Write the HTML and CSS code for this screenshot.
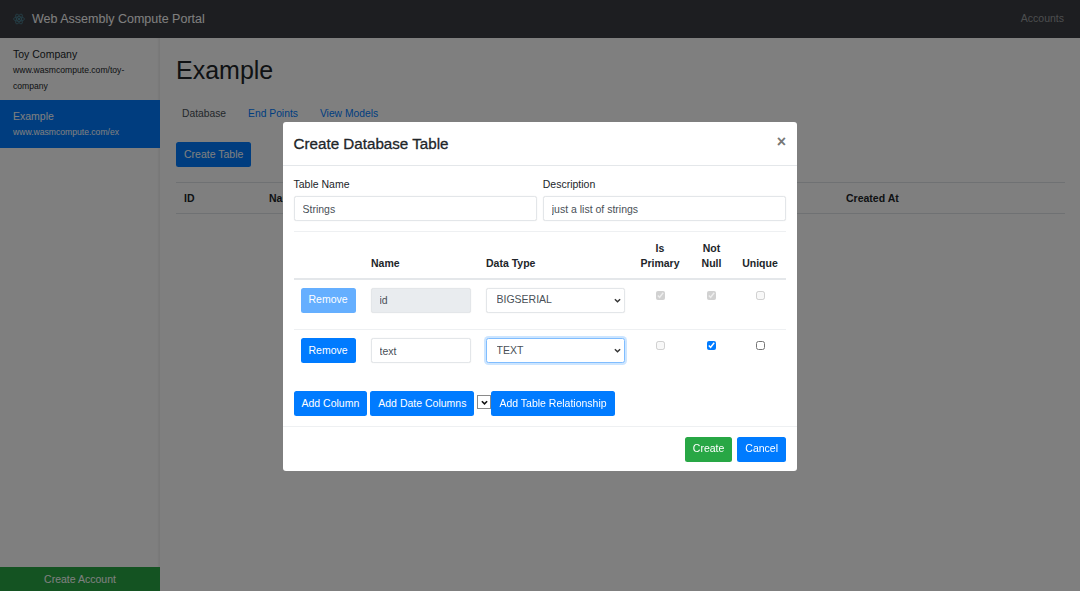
FILE: index.html
```html
<!DOCTYPE html>
<html>
<head>
    <title>Web Assembly Compute Portal</title>
    <link rel="stylesheet" href="styles.css">
</head>
<body>
    <nav class="navbar">
        <a class="brand">
            <svg class="logo" viewBox="0 0 24 24" fill="none" stroke="#4f94aa" stroke-width="1.2">
                <ellipse cx="12" cy="12" rx="11" ry="4.4"/>
                <ellipse cx="12" cy="12" rx="11" ry="4.4" transform="rotate(60 12 12)"/>
                <ellipse cx="12" cy="12" rx="11" ry="4.4" transform="rotate(120 12 12)"/>
                <circle cx="12" cy="12" r="2" fill="#4f94aa" stroke="none"/>
            </svg>
            Web Assembly Compute Portal
        </a>
        <a class="nav-right">Accounts</a>
    </nav>

    <div class="layout">
        <aside class="sidebar">
            <a class="company">
                <div class="company-name">Toy Company</div>
                <div class="company-url">www.wasmcompute.com/toy-company</div>
            </a>
            <a class="company active">
                <div class="company-name">Example</div>
                <div class="company-url">www.wasmcompute.com/ex</div>
            </a>
            <a class="create-account">Create Account</a>
        </aside>

        <main class="content">
            <h1>Example</h1>
            <div class="tabs">
                <a class="tab current">Database</a>
                <a class="tab">End Points</a>
                <a class="tab">View Models</a>
            </div>
            <button class="btn blue create-table">Create Table</button>
            <table class="list">
                <thead>
                    <tr>
                        <th class="col-id">ID</th>
                        <th class="col-name">Name</th>
                        <th>Created At</th>
                    </tr>
                </thead>
            </table>
        </main>
    </div>

    <div class="backdrop"></div>

    <div class="modal-wrap">
        <div class="modal">
            <div class="modal-header">
                <h5>Create Database Table</h5>
                <span class="close">&times;</span>
            </div>
            <div class="modal-body">
                <div class="form-row">
                    <div class="field">
                        <label>Table Name</label>
                        <input class="input" type="text" value="Strings">
                    </div>
                    <div class="field">
                        <label>Description</label>
                        <input class="input" type="text" value="just a list of strings">
                    </div>
                </div>

                <table class="columns">
                    <colgroup>
                        <col class="c-remove">
                        <col class="c-name">
                        <col class="c-type">
                        <col class="c-primary">
                        <col class="c-null">
                        <col class="c-unique">
                    </colgroup>
                    <thead>
                        <tr>
                            <th></th>
                            <th>Name</th>
                            <th>Data Type</th>
                            <th class="center">Is<br>Primary</th>
                            <th class="center">Not<br>Null</th>
                            <th class="center">Unique</th>
                        </tr>
                    </thead>
                    <tbody>
                        <tr>
                            <td><button class="btn blue" disabled>Remove</button></td>
                            <td><input class="input" type="text" value="id" disabled></td>
                            <td>
                                <select class="input select">
                                    <option>BIGSERIAL</option>
                                    <option>TEXT</option>
                                </select>
                            </td>
                            <td class="center"><input type="checkbox" checked disabled></td>
                            <td class="center"><input type="checkbox" checked disabled></td>
                            <td class="center"><input type="checkbox" disabled></td>
                        </tr>
                        <tr>
                            <td><button class="btn blue">Remove</button></td>
                            <td><input class="input" type="text" value="text"></td>
                            <td>
                                <select class="input select focused">
                                    <option>TEXT</option>
                                    <option>BIGSERIAL</option>
                                </select>
                            </td>
                            <td class="center"><input type="checkbox" disabled></td>
                            <td class="center"><input type="checkbox" checked></td>
                            <td class="center"><input type="checkbox"></td>
                        </tr>
                    </tbody>
                </table>

                <div class="actions">
                    <button class="btn blue">Add Column</button>
                    <button class="btn blue">Add Date Columns</button>
                    <select class="mini-select"><option></option></select>
                    <button class="btn blue">Add Table Relationship</button>
                </div>
            </div>
            <div class="modal-footer">
                <button class="btn green">Create</button>
                <button class="btn blue">Cancel</button>
            </div>
        </div>
    </div>
</body>
</html>
```

FILE: styles.css
```css
* {
    box-sizing: border-box;
}
html, body {
    height: 100%;
}
body {
    margin: 0;
    overflow: hidden;
    background-color: #fff;
    color: #212529;
    font-family: "Liberation Sans", Arial, sans-serif;
    font-size: 10.5px;
    line-height: 1.5;
}

/* top bar */
.navbar {
    height: 38px;
    background-color: #3b3d42;
    display: flex;
    align-items: center;
    justify-content: space-between;
    padding: 0 16px 0 13px;
}
.brand {
    display: flex;
    align-items: center;
    gap: 7px;
    font-size: 12.5px;
    color: #fff;
}
.logo {
    width: 12px;
    height: 12px;
}
.nav-right {
    color: #999c9f;
}

/* left column */
.layout {
    display: flex;
    height: calc(100% - 38px);
}
.sidebar {
    width: 160px;
    flex-shrink: 0;
    display: flex;
    flex-direction: column;
    box-shadow: inset -2px 0 2px rgba(0, 0, 0, .06);
}
.company {
    display: block;
    padding: 8px 13px 6px;
}
.company.active {
    height: 48px;
    background-color: #007bff;
    color: #fff;
}
.company-name {
    line-height: 17px;
}
.company-url {
    font-size: 8.6px;
    line-height: 15.5px;
}
.create-account {
    margin-top: auto;
    height: 24px;
    line-height: 24px;
    text-align: center;
    background-color: #28a745;
    color: #fff;
}

/* page body */
.content {
    flex: 1;
    padding: 0 15px 0 16px;
}
h1 {
    margin: 16px 0 0;
    font-size: 25px;
    font-weight: 400;
    line-height: 33px;
}
.tabs {
    display: flex;
    gap: 22px;
    padding: 19px 0 0 6px;
    font-size: 10.3px;
    line-height: 16px;
    height: 55px;
}
.tab {
    color: #007bff;
}
.tab.current {
    color: #495057;
}
.create-table {
    display: block;
}
.list {
    width: 100%;
    margin-top: 15px;
    border-collapse: collapse;
}
.list th {
    padding: 8px 8px 6px;
    height: 31px;
    text-align: left;
    border-top: 1px solid #dee2e6;
    border-bottom: 1.5px solid #dee2e6;
}
.col-id {
    width: 85px;
}
.col-name {
    width: 577px;
}

/* dialog */
.backdrop {
    position: fixed;
    top: 0;
    right: 0;
    bottom: 0;
    left: 0;
    background-color: rgba(0, 0, 0, .5);
}
.modal-wrap {
    position: fixed;
    top: 0;
    right: 0;
    bottom: 0;
    left: 0;
    display: flex;
    justify-content: center;
    align-items: flex-start;
    padding-top: 122px;
}
.modal {
    width: 514px;
    height: 349px;
    background-color: #fff;
    border-radius: 3px;
    display: flex;
    flex-direction: column;
}
.modal-header {
    height: 44px;
    padding: 2px 11px 0 10.5px;
    display: flex;
    align-items: center;
    justify-content: space-between;
    border-bottom: 1px solid #e4e7ea;
}
.modal-header h5 {
    margin: 0;
    font-size: 15.2px;
    font-weight: 400;
    -webkit-text-stroke: .3px #212529;
}
.close {
    font-size: 16px;
    font-weight: 700;
    color: #777;
    margin-top: -6px;
}
.modal-body {
    flex: 1;
    padding: 10px 11px 0 10.5px;
}
.form-row {
    display: flex;
    gap: 6px;
}
.field {
    flex: 1;
    min-width: 0;
}
.field label {
    display: block;
    line-height: 16px;
    margin-bottom: 4px;
}
.input {
    display: block;
    width: 100%;
    height: 25px;
    padding: 0 8px;
    font: inherit;
    color: #495057;
    background-color: #fff;
    border: 1px solid #e3e6e9;
    border-radius: 2.5px;
    box-shadow: 0 0 1px rgba(0, 0, 0, .12);
}
.input:disabled {
    background-color: #e9ecef;
}
.select {
    appearance: none;
    padding: 0 10px;
    background-image: url("data:image/svg+xml,%3Csvg xmlns='http://www.w3.org/2000/svg' viewBox='0 0 8 5'%3E%3Cpath d='M1 1l3 3 3-3' fill='none' stroke='%23333' stroke-width='1.6'/%3E%3C/svg%3E");
    background-repeat: no-repeat;
    background-position: right 3px center;
    background-size: 7px 5px;
}
.input.focused {
    border-color: #80bdff;
    box-shadow: 0 0 0 2px rgba(0, 123, 255, .2);
}

.columns {
    width: 492px;
    margin-top: 10px;
    table-layout: fixed;
    border-collapse: collapse;
}
.c-remove { width: 70px; }
.c-name { width: 115px; }
.c-type { width: 153px; }
.c-primary { width: 57px; }
.c-null { width: 46px; }
.c-unique { width: 51px; }
.columns th {
    padding: 7px 7px 6px 7.5px;
    height: 47px;
    vertical-align: bottom;
    text-align: left;
    line-height: 15.5px;
    border-top: 1px solid #eef0f2;
    border-bottom: 2px solid #e4e7ea;
}
.columns td {
    padding: 8px 7px 0;
    height: 51px;
    vertical-align: top;
    border-bottom: 1px solid #eef0f2;
}
.columns td:nth-child(2) {
    padding-right: 8px;
}
.columns tr:last-child td {
    border-bottom: none;
}
.columns th.center, .columns td.center {
    text-align: center;
    padding-left: 3px;
    padding-right: 3px;
}
.columns td.center {
    padding-top: 3px;
}
input[type="checkbox"] {
    width: 9px;
    height: 9px;
    margin: 8px 0 0;
    accent-color: #007bff;
}

.actions {
    margin-top: 10.5px;
    display: flex;
    align-items: flex-start;
    gap: 3px;
}
.mini-select {
    appearance: none;
    width: 14px;
    height: 14px;
    margin: 4px 0 0;
    padding: 0;
    border: 1px solid #8a8a8a;
    border-radius: 0;
    background-color: #fff;
    background-image: url("data:image/svg+xml,%3Csvg xmlns='http://www.w3.org/2000/svg' viewBox='0 0 8 5'%3E%3Cpath d='M1 1l3 3 3-3' fill='none' stroke='%23111' stroke-width='1.8'/%3E%3C/svg%3E");
    background-repeat: no-repeat;
    background-position: center;
    background-size: 7px 5px;
}
.actions .mini-select + .btn {
    margin-left: -3px;
}

.modal-footer {
    height: 45px;
    padding: 0 11px 0 10.5px;
    display: flex;
    align-items: center;
    justify-content: flex-end;
    gap: 5px;
    border-top: 1px solid #eef0f2;
}

/* buttons */
.btn {
    display: inline-block;
    height: 25px;
    padding: 0 8px;
    border: none;
    border-radius: 2.5px;
    font: inherit;
    color: #fff;
    cursor: pointer;
}
.blue {
    background-color: #007bff;
}
.blue:disabled {
    opacity: .6;
}
.green {
    background-color: #28a745;
}
```
